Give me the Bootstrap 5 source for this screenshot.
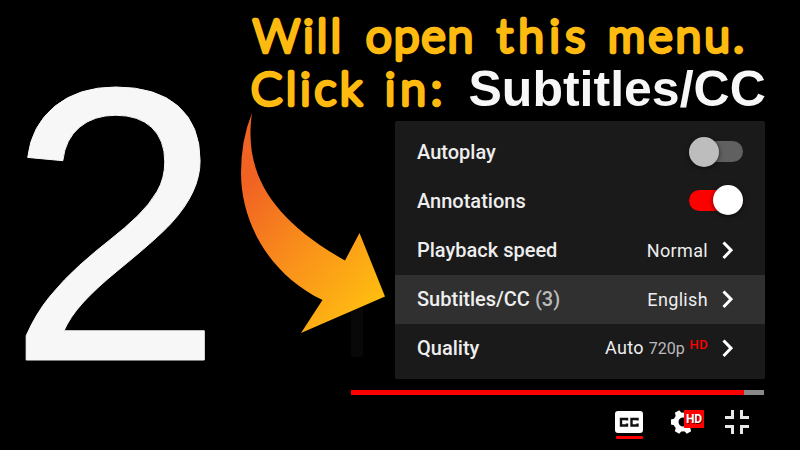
<!DOCTYPE html>
<html lang="en">
<head>
<meta charset="utf-8">
<meta name="viewport" content="width=device-width, initial-scale=1">
<title>Subtitles menu, step 2</title>
<link href="https://cdn.jsdelivr.net/npm/bootstrap@5.3.0/dist/css/bootstrap.min.css" rel="stylesheet">
<style>
body{width:800px;height:450px;background:#000;color:#eee;font-family:Roboto,sans-serif}
.step{width:240px;height:450px;font:391px/450px "Liberation Sans",Arial,sans-serif;color:#f7f7f7;-webkit-text-stroke:1px #f7f7f7;padding-left:6.500px}
.main{width:560px}
.title{height:121px}
.hand{font-family:"Comic Sans MS",Lato,sans-serif;font-weight:300;font-size:46px;fill:#ffba10;stroke:#ffba10;stroke-width:4.4px;stroke-linejoin:round}
.target{font:bold 50px "Liberation Sans",Arial,sans-serif;fill:#f7f7f7}
.menu{width:370px;height:258px;margin-left:155px;padding:7px 0 6px;background:#1a1a1a;border-radius:2px}
.item{height:49px;padding:0 22px;font-size:20px;font-weight:500;line-height:49px}
.item.current{background:#303030}
.count{color:#bbb}
.val{font-size:18px;font-weight:400;letter-spacing:.35px;margin-right:14px;padding-bottom:1px}
.res{font-size:16px;color:#bbb;letter-spacing:0}
.hd{font-size:13px;font-weight:500;color:#f00;position:relative;top:-5px}
.chev{width:11px;height:19px;margin-right:10px;margin-top:-1px}
.toggle{width:54px;height:21px;border-radius:11px;background:#606060;margin-top:-2px}
.toggle i{width:30px;height:30px;border-radius:50%;background:#bdbdbd;box-shadow:0 1px 5px #0009;flex:none}
.toggle.on{background:#f00;margin-top:-3px}
.toggle.on i{background:#fff}
.track{width:413px;height:5px;margin:11px 0 0 111px;background:#888;border-radius:0}
.played{width:393px;background:#f00}
.controls{height:50px;margin-left:370px}
.arrow{left:230px;top:100px}
.ghost{left:351px;top:300px;width:12px;height:57px;background:#080808;border-radius:0 0 3px 3px}
</style>
</head>
<body class="d-flex overflow-hidden position-relative">
<div class="step flex-shrink-0">2</div>
<main class="main flex-shrink-0 d-flex flex-column">
<svg class="title flex-shrink-0" width="560" height="121" viewBox="240 0 560 121">
<g class="hand">
<text x="253" y="52" textLength="88">Will</text><text x="366" y="52" textLength="107">open</text><text x="497" y="52" textLength="88">this</text><text x="608" y="52" textLength="136">menu.</text>
<text x="251" y="105" textLength="111">Click</text><text x="385" y="105" textLength="57">in:</text>
</g>
<text class="target" x="468.500" y="106">Subtitles/CC</text>
</svg>
<div class="menu flex-shrink-0">
<div class="item d-flex align-items-center justify-content-between">Autoplay<span class="toggle d-flex align-items-center"><i></i></span></div>
<div class="item d-flex align-items-center justify-content-between">Annotations<span class="toggle on d-flex align-items-center justify-content-end"><i></i></span></div>
<div class="item d-flex align-items-center">Playback speed<span class="val ms-auto">Normal</span><svg class="chev" viewBox="0 0 11 19"><path d="M1.500 1.500 9 9.200 1.500 17" fill="none" stroke="#fff" stroke-width="3"/></svg></div>
<div class="item current d-flex align-items-center"><span>Subtitles/CC <span class="count">(3)</span></span><span class="val ms-auto">English</span><svg class="chev" viewBox="0 0 11 19"><path d="M1.500 1.500 9 9.200 1.500 17" fill="none" stroke="#fff" stroke-width="3"/></svg></div>
<div class="item d-flex align-items-center">Quality<span class="val ms-auto">Auto <span class="res">720p</span> <span class="hd">HD</span></span><svg class="chev" viewBox="0 0 11 19"><path d="M1.500 1.500 9 9.200 1.500 17" fill="none" stroke="#fff" stroke-width="3"/></svg></div>
</div>
<div class="progress track flex-shrink-0"><div class="progress-bar played"></div></div>
<svg class="controls flex-shrink-0" width="150" height="50" viewBox="610 395 150 50">
<rect x="615" y="411" width="28" height="22" rx="3" fill="#fff"/>
<path d="M627 420.500v-1.500h-6v6.500h6v-2M637.500 420.500v-1.500h-6v6.500h6v-2" fill="none" stroke="#111" stroke-width="2.400"/>
<rect x="616" y="436" width="27" height="3" rx="1" fill="#f00"/>
<g transform="translate(683 422)" fill="#fff"><circle r="7" fill="none" stroke="#fff" stroke-width="5"/><g transform="rotate(30)"><path id="t" d="M-3.500-8-2.500-12H2.500L3.500-8Z"/><use href="#t" transform="rotate(60)"/><use href="#t" transform="rotate(120)"/><use href="#t" transform="rotate(180)"/><use href="#t" transform="rotate(240)"/><use href="#t" transform="rotate(300)"/></g></g>
<rect x="684" y="410" width="20" height="18" fill="#f00"/>
<text x="686.500" y="424" font-family="Roboto,sans-serif" font-size="12" font-weight="700" textLength="16" fill="#500">HD</text>
<text x="686" y="423.200" font-family="Roboto,sans-serif" font-size="12" font-weight="700" textLength="16" fill="#fff">HD</text>
<path d="M725 417.500h7.500V410M741.500 410v7.500H749M725 426.500h7.500V434M741.500 434v-7.500H749" fill="none" stroke="#e8e8e8" stroke-width="3"/>
</svg>
</main>
<div class="ghost position-absolute"></div>
<svg class="arrow position-absolute" width="160" height="240" viewBox="230 100 160 240">
<defs><linearGradient id="flame" gradientUnits="userSpaceOnUse" x1="245" y1="190" x2="375" y2="305"><stop stop-color="#f16323"/><stop offset=".45" stop-color="#f98e1b"/><stop offset="1" stop-color="#ffbd10"/></linearGradient></defs>
<path d="M252 113C244 168 266 216 345 260.500L359.500 233 385 296.500 301 333 322.500 300C270 275 241 223 241 173Q241 140 252 113Z" fill="url(#flame)"/>
</svg>
<script src="https://cdn.jsdelivr.net/npm/bootstrap@5.3.0/dist/js/bootstrap.bundle.min.js"></script>
</body>
</html>
